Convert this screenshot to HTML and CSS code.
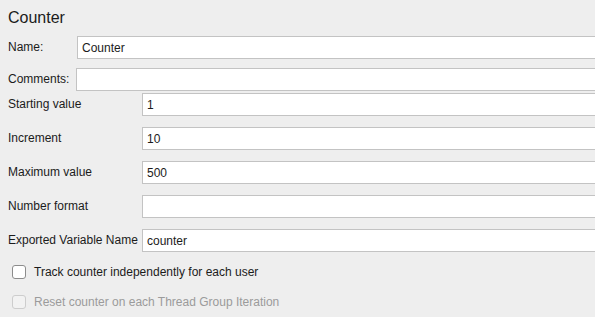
FILE: index.html
```html
<!DOCTYPE html>
<html lang="en">
  <head>
    <meta charset="UTF-8" />
    <title>Counter</title>
    <link rel="stylesheet" href="styles.css">
  </head>
  <body>
    <main class="panel">
      <h1 class="title">Counter</h1>
      <div class="row">
        <label class="lbl lbl-name" for="name">Name:</label>
        <input class="field" type="text" id="name" value="Counter" />
      </div>
      <div class="row row-comments">
        <label class="lbl lbl-comments" for="comments">Comments:</label>
        <input class="field" type="text" id="comments" />
      </div>
      <div class="config">
        <div class="row">
          <label class="lbl lbl-wide" for="start">Starting value</label>
          <input class="field" type="text" id="start" value="1" />
        </div>
        <div class="row">
          <label class="lbl lbl-wide" for="incr">Increment</label>
          <input class="field" type="text" id="incr" value="10" />
        </div>
        <div class="row">
          <label class="lbl lbl-wide" for="max">Maximum value</label>
          <input class="field" type="text" id="max" value="500" />
        </div>
        <div class="row">
          <label class="lbl lbl-wide" for="format">Number format</label>
          <input class="field" type="text" id="format" />
        </div>
        <div class="row">
          <label class="lbl lbl-wide" for="varname">Exported Variable Name</label>
          <input class="field" type="text" id="varname" value="counter" />
        </div>
      </div>
      <div class="checks">
        <label class="check">
          <span class="box"></span>
          <span>Track counter independently for each user</span>
        </label>
        <label class="check disabled">
          <span class="box"></span>
          <span>Reset counter on each Thread Group Iteration</span>
        </label>
      </div>
    </main>
  </body>
</html>
```

FILE: styles.css
```css
html, body {
  margin: 0;
  height: 100%;
  overflow: hidden;
}
body {
  background: #eeeeee;
  font-family: 'Liberation Sans', Arial, sans-serif;
  font-size: 12px;
  color: #1b1b1b;
}
.panel {
  width: 100%;
  padding-left: 8px;
  box-sizing: border-box;
}
.title {
  margin: 8px 0 8px 0;
  font-size: 16px;
  font-weight: normal;
  line-height: 20px;
  color: #1b1b1b;
}
.row {
  display: flex;
  align-items: center;
  height: 23px;
}
.row-comments {
  margin-top: 9px;
}
.config {
  display: flex;
  flex-direction: column;
  gap: 11px;
  margin-top: 2px;
}
.lbl {
  flex: none;
  line-height: 23px;
}
.lbl-name {
  width: 69px;
}
.lbl-comments {
  width: 68px;
}
.lbl-wide {
  width: 134px;
}
.field {
  flex: 1;
  min-width: 0;
  height: 23px;
  box-sizing: border-box;
  margin: 0;
  border: 1px solid #c3c3c3;
  border-right: none;
  background: #ffffff;
  padding: 0 4px;
  font-family: 'Liberation Sans', Arial, sans-serif;
  font-size: 12px;
  color: #1b1b1b;
  outline: none;
}
.checks {
  margin-top: 5px;
  padding-left: 4px;
}
.check {
  display: flex;
  align-items: center;
  height: 30px;
  gap: 8px;
}
.box {
  width: 14px;
  height: 14px;
  box-sizing: border-box;
  border: 1px solid #8c8c8c;
  border-radius: 3px;
  background: #ffffff;
}
.check.disabled {
  color: #9b9b9b;
}
.check.disabled .box {
  border-color: #cdcdcd;
  background: #f2f2f2;
}
```
